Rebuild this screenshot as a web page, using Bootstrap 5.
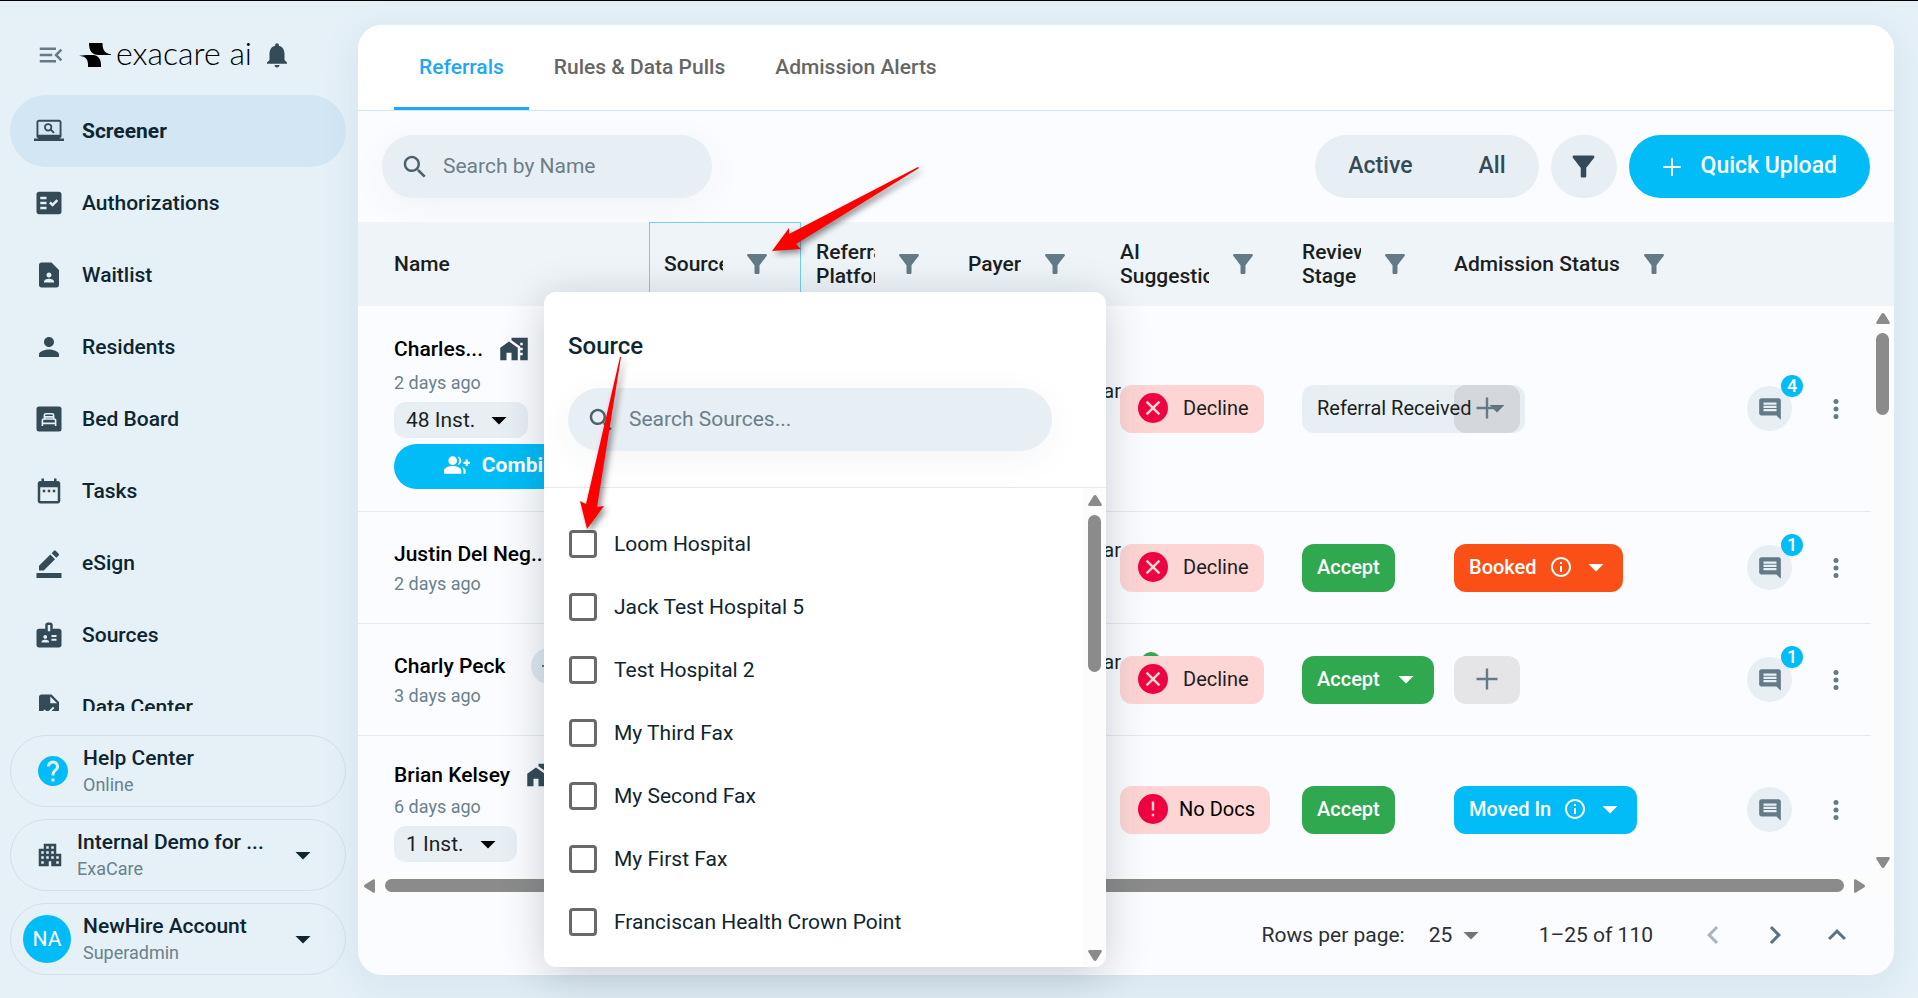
<!DOCTYPE html>
<html lang="en">
<head>
  <meta charset="UTF-8" />
  <meta name="viewport" content="width=device-width, initial-scale=1" />
  <title>Screener - Referrals</title>
  <link
    rel="stylesheet"
    href="https://cdn.jsdelivr.net/npm/bootstrap@5.3.0/dist/css/bootstrap.min.css"
  />
  <style>
    body {
      font-family: Roboto, "Liberation Sans", sans-serif;
      font-size: 21px;
      line-height: 24px;
      color: #1b1f22;
      background: #e5f0f7;
    }
    svg {
      fill: currentColor;
      flex-shrink: 0;
    }
    button {
      font-weight: inherit;
    }
    .i24 { width: 24px; height: 24px; }
    .i26 { width: 26px; height: 26px; }
    .i30 { width: 30px; height: 30px; }
    .i36 { width: 36px; height: 36px; }
    .fw-mid { font-weight: 500; }
    .ink-slate { color: #344a56; }
    .ink-gray { color: #647b87; }
    .ink-sky { color: #01bcf6; }
    .app-shell {
      height: 100vh;
      border-top: 1px solid #000;
      overflow: hidden;
    }

    /* Sidebar */
    .side-panel {
      width: 358px;
      padding: 0 12px 23px 10px;
    }
    .brand-row {
      height: 94px;
      padding: 14px 0 0 26px;
      color: #344a56;
    }
    .brand-mark {
      margin-left: 13px;
      color: #000;
    }
    .brand-name {
      font-family: Lato, sans-serif;
      font-weight: 300;
      font-size: 32px;
      width: 151px;
      padding: 0 0 4px 5px;
      color: #000;
    }
    .side-nav {
      overflow: hidden;
      min-height: 0;
    }
    .side-link {
      height: 72px;
      padding-left: 24px;
      gap: 18px;
      border-radius: 36px;
      color: #0f2530;
      font-weight: 500;
      text-decoration: none;
      flex-shrink: 0;
    }
    .side-link svg {
      color: #344a56;
    }
    .side-link.active {
      background: #d3e6f4;
      font-weight: 700;
    }
    .side-card {
      height: 72px;
      border: 1px solid #d3dfea;
      border-radius: 36px;
      background: none;
      color: #0f2530;
      text-align: left;
      padding: 0 24px;
    }
    .side-cards {
      gap: 12px;
      padding-top: 24px;
    }
    .side-sub {
      font-size: 18px;
      margin-top: 3px;
      color: #6b818c;
    }
    .avatar {
      width: 48px;
      height: 48px;
      background: #01bcf6;
      color: #fff;
      margin-left: -12px;
    }

    /* Main panel */
    .main-panel {
      margin: 24px 24px 23px 0;
      background: #fbfcff;
      border-radius: 24px;
      box-shadow: 0 8px 36px rgba(110, 150, 180, .14);
      min-width: 0;
    }
    .top-tabs {
      height: 86px;
      padding-left: 36px;
      background: #fff;
      border-bottom: 1px solid #cfe6f3;
      border-radius: 24px 24px 0 0;
    }
    .top-tabs .nav-link {
      padding: 12px 25px 0;
      height: 85px;
      border-radius: 0;
      color: #666;
      font-weight: 500;
      line-height: 60px;
    }
    .top-tabs .nav-link.active {
      color: #1ea7f2;
      border-bottom: 3px solid #1ea7f2;
    }
    .tool-bar {
      height: 111px;
      padding: 0 24px;
      gap: 12px;
    }
    .search-pill {
      height: 63px;
      border-radius: 32px;
      background: #e7eef4;
      box-shadow: 0 8px 36px rgba(30, 60, 90, .05);
      padding: 0 18px;
      gap: 13px;
      color: #4c626d;
    }
    .search-pill input {
      border: 0;
      padding: 0 0 2px;
      background: none;
      outline: 0;
      width: 100%;
      color: #1b1f22;
    }
    .search-pill input::placeholder {
      color: #6b7f8a;
      opacity: 1;
    }
    .search-main {
      width: 330px;
    }
    .soft-pill {
      height: 63px;
      border: 0;
      border-radius: 32px;
      background: #e7eef4;
      color: #344a56;
    }
    .soft-pill button {
      border: 0;
      background: none;
      color: inherit;
      padding: 0 33px 1px;
      font-size: 23px;
      font-weight: 500;
    }
    .filter-btn {
      width: 66px;
    }
    .filter-btn svg {
      width: 33px;
      height: 33px;
    }
    .upload-btn {
      height: 63px;
      border: 0;
      border-radius: 32px;
      background: #01bcf6;
      color: #fff;
      font-size: 23px;
      font-weight: 500;
      padding: 0 33px 0 28px;
      gap: 14px;
    }
    .upload-btn span {
      padding-bottom: 2px;
    }

    /* Table */
    .table-zone {
      min-height: 0;
      overflow: hidden;
    }
    .ref-table {
      table-layout: fixed;
      border-collapse: separate;
      border-spacing: 0;
      width: 100%;
      min-width: 1360px;
      align-self: flex-start;
    }
    .ref-table th {
      height: 84px;
      background: #eef4f8;
      padding: 0 15px;
      font-weight: 500;
      vertical-align: middle;
    }
    .ref-table td {
      padding: 0 0 0 15px;
      vertical-align: middle;
      border-bottom: 1px solid #e3eaf0;
      white-space: nowrap;
    }
    .ref-table th:first-child,
    .ref-table td:first-child {
      padding-left: 36px;
    }
    .ref-table th.picked {
      box-shadow: inset 0 0 0 1px #6fd0ee;
    }
    .head-text {
      overflow: hidden;
      min-width: 0;
    }
    .head-filter {
      border: 0;
      padding: 0;
      background: none;
      color: #647b87;
      margin: 0 14px 0 19px;
      line-height: 0;
    }
    .row-tall { height: 206px; }
    .row-mid { height: 112px; }
    .row-last { height: 148px; }
    .who {
      color: #000;
      font-weight: 500;
      height: 32px;
      gap: 16px;
    }
    .who svg {
      color: #344a56;
    }
    .who-36 { height: 36px; }
    .who-40 { height: 40px; }
    .ago {
      font-size: 18px;
      line-height: 20px;
      margin: 4px 0;
      color: #6b818c;
    }
    .inst-chip {
      height: 36px;
      border: 0;
      border-radius: 12px;
      background: #e7eef4;
      color: #1b1f22;
      padding: 0 11px 0 12px;
      gap: 6px;
      margin-top: 9px;
    }
    .inst-chip svg {
      color: #000;
    }
    .combine-btn {
      height: 45px;
      width: 222px;
      border: 0;
      border-radius: 23px;
      background: #01bcf6;
      color: #fff;
      font-weight: 700;
      margin-top: 6px;
      gap: 12px;
      padding-bottom: 3px;
    }
    .mini-btn {
      width: 36px;
      height: 36px;
      border: 0;
      padding: 0;
      margin-left: 10px;
      background: #e0e9f0;
      color: #344a56;
    }
    .payer-text {
      font-size: 20px;
      margin: 0 -16px 36px 0;
    }
    .payer-check {
      color: #30a84f;
      margin: 0 -58px 36px 18px;
    }
    .chip {
      height: 48px;
      border: 0;
      border-radius: 12px;
      padding: 0 15px 1px;
      gap: 12px;
      font-size: 20px;
      color: #1b1f22;
      position: relative;
    }
    .chip-drop { padding-right: 10px; gap: 8px; }
    .chip-red { background: #fed5d5; }
    .chip-red svg { color: #ee0340; }
    .chip-gray { background: #e7eef4; }
    .chip-gray svg { color: #647b87; }
    .chip-green { background: #30a84f; color: #fff; font-weight: 500; }
    .chip-orange { background: #fa5017; color: #fff; font-weight: 500; }
    .chip-blue { background: #01bcf6; color: #fff; font-weight: 500; }
    .chip-info { gap: 12px; padding-right: 9px; }
    .chip-info .i36 { margin: 0 0 0 -7px; }
    .chip-add {
      width: 66px;
      background: rgba(70, 60, 60, .12);
      color: #647b87;
    }
    .note-btn {
      width: 45px;
      height: 45px;
      border: 0;
      padding: 0;
      background: #e7eef4;
      color: #647b87;
    }
    .note-count {
      position: absolute;
      top: -11px;
      right: -11px;
      width: 22px;
      height: 22px;
      border-radius: 11px;
      background: #01bcf6;
      color: #fff;
      font-size: 18px;
      line-height: 22px;
      font-weight: 500;
    }
    .more-btn {
      border: 0;
      padding: 0;
      background: none;
      color: #647b87;
      margin: 0 20px 0 29px;
      line-height: 0;
    }

    /* Scroll bars */
    .bar-v {
      width: 23px;
      padding: 7px 0 6px;
      background: #fcfcfc;
      color: #8b8b8b;
    }
    .bar-h {
      height: 23px;
      padding: 0 29px 0 6px;
      background: #fcfcfc;
      color: #8b8b8b;
      gap: 10px;
    }
    .thumb {
      background: #8b8b8b;
      border-radius: 7px;
    }
    .bar-v .thumb { width: 13px; margin-top: 9px; }
    .bar-h .thumb { height: 13px; }
    .thumb-rows { height: 82px; }
    .thumb-options { height: 157px; }
    .head-cap { height: 84px; background: #eef4f8; }

    .pager {
      height: 78px;
      padding: 0 39px 2px 0;
      color: #2b2f32;
    }
    .pager button {
      border: 0;
      padding: 0;
      background: none;
      color: #5b7380;
      line-height: 0;
      margin-left: 26px;
    }
    .pager select {
      border: 0;
      background: none;
      appearance: none;
      color: inherit;
    }
    .page-caret {
      color: #6f7477;
      margin-right: 50px;
    }

    /* Source filter menu */
    .source-menu {
      position: absolute;
      left: 186px;
      top: 267px;
      bottom: 8px;
      width: 562px;
      background: #fff;
      border-radius: 12px;
      box-shadow: 0 8px 44px rgba(20, 40, 60, .22);
      overflow: hidden;
      z-index: 5;
    }
    .menu-top {
      padding: 36px 54px 36px 24px;
      border-bottom: 1px solid #e3eaf0;
    }
    .menu-title {
      font-size: 24px;
      line-height: 36px;
      font-weight: 500;
      color: #0f2530;
      margin-bottom: 24px;
    }
    .source-list {
      padding: 24px 0 0 25px;
      color: #0f2530;
      min-height: 0;
      overflow: hidden;
    }
    .source-list label {
      height: 63px;
      gap: 17px;
      flex-shrink: 0;
    }
    .source-list .form-check-input {
      width: 28px;
      height: 28px;
      margin: 0;
      border: 3px solid #696969;
      border-radius: 4px;
      flex-shrink: 0;
    }
    .pointer {
      position: absolute;
      z-index: 10;
      fill: #fe0000;
      filter: drop-shadow(3px 3px 3px rgba(0, 0, 0, .45));
      pointer-events: none;
      overflow: visible;
    }
    .pointer-filter { left: 771px; top: 165px; width: 150px; height: 90px; }
    .pointer-check { left: 579px; top: 356px; width: 44px; height: 176px; }
  </style>
</head>
<body>
  <!-- Icon set -->
  <svg class="d-none">
    <symbol id="menu" viewBox="0 0 24 24"><path d="M3 18h13v-2H3v2zm0-5h10v-2H3v2zm0-7v2h13V6H3zm18 9.59L17.42 12 21 8.41 19.59 7l-5 5 5 5L21 15.59z"/></symbol>
    <symbol id="bell" viewBox="0 0 24 24"><path d="M12 22c1.1 0 2-.9 2-2h-4c0 1.1.89 2 2 2zm6-6v-5c0-3.07-1.64-5.64-4.5-6.32V4c0-.83-.67-1.5-1.5-1.5s-1.5.67-1.5 1.5v.68C7.63 5.36 6 7.92 6 11v5l-2 2v1h16v-1l-2-2z"/></symbol>
    <symbol id="laptop" viewBox="0 0 24 24"><path d="M20 18c1.1 0 2-.9 2-2V5c0-1.1-.9-2-2-2H4c-1.1 0-2 .9-2 2v11c0 1.1.9 2 2 2H0v2h24v-2h-4zM3.5 4.5h17V15h-17z" fill-rule="evenodd"/><path d="M13 10.500l3 3" stroke="currentColor" stroke-width="1.500"/><circle cx="11.300" cy="9" r="2.600" fill="none" stroke="currentColor" stroke-width="1.400"/></symbol>
    <symbol id="checklist" viewBox="0 0 24 24"><path d="M20 3H4c-1.100 0-2 .9-2 2v14c0 1.100.9 2 2 2h16c1.100 0 2-.9 2-2V5c0-1.100-.9-2-2-2zM10 17H5v-2h5v2zm0-4H5v-2h5v2zm0-4H5V7h5v2zm4.820 6L12 12.160l1.410-1.410 1.410 1.420L17.990 9l1.420 1.420L14.820 15z"/></symbol>
    <symbol id="contact" viewBox="0 0 24 24"><path d="M14 2H6c-1.100 0-2 .9-2 2v16c0 1.100.9 2 2 2h12c1.100 0 2-.9 2-2V8l-6-6zm-2 8c1.100 0 2 .9 2 2s-.9 2-2 2-2-.9-2-2 .9-2 2-2zm4 8H8v-.57c0-.81.48-1.530 1.220-1.850.85-.37 1.790-.58 2.780-.58s1.930.21 2.780.58c.74.32 1.220 1.040 1.220 1.850V18z"/></symbol>
    <symbol id="person" viewBox="0 0 24 24"><path d="M12 12c2.210 0 4-1.790 4-4s-1.790-4-4-4-4 1.790-4 4 1.790 4 4 4zm0 2c-2.670 0-8 1.340-8 4v2h16v-2c0-2.660-5.330-4-8-4z"/></symbol>
    <symbol id="bed" viewBox="0 0 24 24"><rect x="2" y="2" width="20" height="20" rx="2"/><path d="M6.700 17.500v-4.200q0-1.300 1.400-1.300h7.800q1.400 0 1.400 1.300v4.200M6.700 15.500h10.600M8.300 12V9q0-1.200 1.200-1.200h5q1.200 0 1.200 1.200v3M8.300 10.300h7.400" fill="none" stroke="#e5f0f7" stroke-width="1.300"/></symbol>
    <symbol id="calendar" viewBox="0 0 24 24"><path d="M19 4h-1V2h-2v2H8V2H6v2H5c-1.110 0-2 .9-2 2v14c0 1.100.89 2 2 2h14c1.100 0 2-.9 2-2V6c0-1.100-.9-2-2-2zm0 16H5V9h14v11zM9 13H7v-2h2v2zm4 0h-2v-2h2v2zm4 0h-2v-2h2v2z"/></symbol>
    <symbol id="sign" viewBox="0 0 24 24"><path d="M22 24H2v-4h20v4zM13.060 5.190l3.750 3.750L7.750 18H4v-3.750l9.060-9.060zm4.820 2.680l-3.750-3.750 1.830-1.830c.39-.39 1.020-.39 1.410 0l2.340 2.340c.39.39.39 1.020 0 1.410l-1.830 1.830z"/></symbol>
    <symbol id="badge-id" viewBox="0 0 24 24"><path d="M20 7h-5V4c0-1.100-.9-2-2-2h-2c-1.100 0-2 .9-2 2v3H4c-1.100 0-2 .9-2 2v11c0 1.100.9 2 2 2h16c1.100 0 2-.9 2-2V9c0-1.100-.9-2-2-2zM9 12c.83 0 1.500.67 1.500 1.500S9.830 15 9 15s-1.500-.67-1.500-1.500S8.170 12 9 12zm3 6H6v-.75c0-1 2-1.500 3-1.500s3 .5 3 1.500V18zm1-9h-2V4h2v5zm5 7.500h-4V15h4v1.500zm0-3h-4V12h4v1.500z"/></symbol>
    <symbol id="file-check" viewBox="0 0 24 24"><path d="M14 2H6c-1.100 0-2 .9-2 2v16c0 1.100.9 2 2 2h12c1.100 0 2-.9 2-2V8l-6-6zm-1 7V3.500L18.500 9H13z"/><path d="M8 14.500l2.800 2.800 5-5" fill="none" stroke="#e5f0f7" stroke-width="1.600"/></symbol>
    <symbol id="help" viewBox="0 0 24 24"><path d="M12 2C6.480 2 2 6.480 2 12s4.480 10 10 10 10-4.480 10-10S17.520 2 12 2zm1 17h-2v-2h2v2zm2.070-7.750l-.9.92C13.450 12.900 13 13.500 13 15h-2v-.5c0-1.100.45-2.100 1.170-2.830l1.240-1.260c.37-.36.59-.86.59-1.410 0-1.100-.9-2-2-2s-2 .9-2 2H8c0-2.210 1.790-4 4-4s4 1.790 4 4c0 .88-.36 1.680-.93 2.250z"/></symbol>
    <symbol id="building" viewBox="0 0 24 24"><path d="M17 11V3H7v4H3v14h8v-4h2v4h8V11h-4zM7 19H5v-2h2v2zm0-4H5v-2h2v2zm0-4H5V9h2v2zm4 4H9v-2h2v2zm0-4H9V9h2v2zm0-4H9V5h2v2zm4 8h-2v-2h2v2zm0-4h-2V9h2v2zm0-4h-2V5h2v2zm4 12h-2v-2h2v2zm0-4h-2v-2h2v2z"/></symbol>
    <symbol id="caret" viewBox="0 0 24 24"><path d="M7 10l5 5 5-5z"/></symbol>
    <symbol id="search" viewBox="0 0 24 24"><path d="M15.500 14h-.79l-.28-.27C15.410 12.590 16 11.110 16 9.500 16 5.910 13.090 3 9.500 3S3 5.910 3 9.500 5.910 16 9.500 16c1.610 0 3.090-.59 4.230-1.570l.27.28v.79l5 4.990L20.490 19l-4.990-5zm-6 0C7.010 14 5 11.990 5 9.500S7.010 5 9.500 5 14 7.010 14 9.500 11.990 14 9.500 14z"/></symbol>
    <symbol id="funnel" viewBox="0 0 24 24"><path d="M4.250 5.610C6.270 8.200 10 13 10 13v6c0 .55.45 1 1 1h2c.55 0 1-.45 1-1v-6s3.720-4.800 5.740-7.390c.51-.66.04-1.610-.79-1.610H5.040c-.83 0-1.300.95-.79 1.610z"/></symbol>
    <symbol id="plus" viewBox="0 0 24 24"><path d="M19 12.800h-6.200V19h-1.600v-6.200H5v-1.600h6.200V5h1.600v6.200H19z"/></symbol>
    <symbol id="homes" viewBox="0 0 24 24"><path d="M1 11v10h5v-6h4v6h5V11L8 6z"/><path d="M10 3v1.970l7 5V11h2v2h-2v2h2v2h-2v4h6V3H10zm9 6h-2V7h2v2z"/></symbol>
    <symbol id="group-add" viewBox="0 0 24 24"><path d="M22 9V7h-2v2h-2v2h2v2h2v-2h2V9zM8 12c2.210 0 4-1.790 4-4s-1.790-4-4-4-4 1.790-4 4 1.790 4 4 4zm0 1c-2.670 0-8 1.340-8 4v3h16v-3c0-2.660-5.330-4-8-4zM12.510 4.050C13.430 5.110 14 6.490 14 8s-.57 2.890-1.490 3.950C14.470 11.700 16 10.040 16 8s-1.530-3.700-3.490-3.950zM16.530 13.830C17.420 14.660 18 15.700 18 17v3h2v-3c0-1.450-1.590-2.510-3.470-3.170z"/></symbol>
    <symbol id="note" viewBox="0 0 24 24"><path d="M22 4c0-1.100-.9-2-2-2H4c-1.100 0-2 .9-2 2v12c0 1.100.9 2 2 2h14l4 4V4zM18 14H6v-2h12v2zm0-3H6V9h12v2zm0-3H6V6h12v2z"/></symbol>
    <symbol id="more" viewBox="0 0 24 24"><circle cx="12" cy="6" r="2"/><circle cx="12" cy="12" r="2"/><circle cx="12" cy="18" r="2"/></symbol>
    <symbol id="info" viewBox="0 0 24 24"><path d="M11 7h2v2h-2zm0 4h2v6h-2zm1-9C6.480 2 2 6.480 2 12s4.480 10 10 10 10-4.480 10-10S17.520 2 12 2zm0 18c-4.410 0-8-3.590-8-8s3.590-8 8-8 8 3.590 8 8-3.590 8-8 8z"/></symbol>
    <symbol id="decline" viewBox="0 0 24 24"><circle cx="12" cy="12" r="10"/><path d="M7.700 7.700l8.600 8.600M16.300 7.700l-8.600 8.600" stroke="#fed5d5" stroke-width="1.700"/></symbol>
    <symbol id="alert" viewBox="0 0 24 24"><circle cx="12" cy="12" r="10"/><path d="M11.200 7h1.600v6h-1.600zM11.200 15.200h1.600v1.600h-1.600z" fill="#fed5d5"/></symbol>
    <symbol id="ok" viewBox="0 0 24 24"><circle cx="12" cy="12" r="10"/><path d="M7 12l3.500 4 6.500-8" fill="none" stroke="#fff" stroke-width="2"/></symbol>
    <symbol id="left" viewBox="0 0 24 24"><path d="M15.410 7.410L14 6l-6 6 6 6 1.410-1.410L10.830 12z"/></symbol>
    <symbol id="right" viewBox="0 0 24 24"><path d="M10 6L8.590 7.410 13.170 12l-4.580 4.590L10 18l6-6z"/></symbol>
    <symbol id="up" viewBox="0 0 24 24"><path d="M12 8l-6 6 1.410 1.410L12 10.830l4.590 4.580L18 14z"/></symbol>
    <symbol id="tri" viewBox="0 0 14 11"><path d="M7 0q1 0 1.600 1l5 8q.8 2-1.200 2H1.600q-2 0-1.200-2l5-8Q6 0 7 0z"/></symbol>
    <symbol id="tri-down" viewBox="0 0 14 11"><path d="M7 11q1 0 1.600-1l5-8q.8-2-1.200-2H1.600q-2 0-1.200 2l5 8q.6 1 1.600 1z"/></symbol>
    <symbol id="tri-left" viewBox="0 0 11 14"><path d="M0 7q0-1 1-1.600l8-5q2-.8 2 1.200v10.800q0 2-2 1.200l-8-5Q0 8 0 7z"/></symbol>
    <symbol id="tri-right" viewBox="0 0 11 14"><path d="M11 7q0-1-1-1.600l-8-5q-2-.8-2 1.200v10.800q0 2 2 1.200l8-5q1-.6 1-1.600z"/></symbol>
  </svg>

  <div class="app-shell d-flex">
    <!-- Sidebar -->
    <aside class="side-panel d-flex flex-column flex-shrink-0">
      <div class="brand-row d-flex align-items-center flex-shrink-0">
        <svg class="i30 ink-gray"><use href="#menu"/></svg>
        <svg class="brand-mark" width="32" height="24" viewBox="0 0 32 24"><path d="M10 0h13.500c0 6 1.500 10.500 8.500 11.200v.8H20C13 12 10 8 10 0z"/><path d="M0 12.700C5 12 9 11.700 14 12c6 .5 8.500 5 8 12H9c.5-7-1.500-10.500-9-11.300z"/></svg>
        <span class="brand-name text-nowrap">exacare ai</span>
        <svg class="i30"><use href="#bell"/></svg>
      </div>
      <nav class="side-nav d-flex flex-column flex-grow-1">
        <a class="side-link active d-flex align-items-center" href="#"><svg class="i30"><use href="#laptop"/></svg>Screener</a>
        <a class="side-link d-flex align-items-center" href="#"><svg class="i30"><use href="#checklist"/></svg>Authorizations</a>
        <a class="side-link d-flex align-items-center" href="#"><svg class="i30"><use href="#contact"/></svg>Waitlist</a>
        <a class="side-link d-flex align-items-center" href="#"><svg class="i30"><use href="#person"/></svg>Residents</a>
        <a class="side-link d-flex align-items-center" href="#"><svg class="i30"><use href="#bed"/></svg>Bed Board</a>
        <a class="side-link d-flex align-items-center" href="#"><svg class="i30"><use href="#calendar"/></svg>Tasks</a>
        <a class="side-link d-flex align-items-center" href="#"><svg class="i30"><use href="#sign"/></svg>eSign</a>
        <a class="side-link d-flex align-items-center" href="#"><svg class="i30"><use href="#badge-id"/></svg>Sources</a>
        <a class="side-link d-flex align-items-center" href="#"><svg class="i30"><use href="#file-check"/></svg>Data Center</a>
      </nav>
      <div class="side-cards d-flex flex-column flex-shrink-0">
        <button class="side-card d-flex align-items-center">
          <svg class="i36 ink-sky"><use href="#help"/></svg>
          <span class="ms-2 ps-1"><span class="d-block fw-mid">Help Center</span><span class="d-block side-sub">Online</span></span>
        </button>
        <button class="side-card d-flex align-items-center">
          <svg class="i30 ink-slate"><use href="#building"/></svg>
          <span class="ms-2 ps-1 flex-grow-1"><span class="d-block fw-mid">Internal Demo for ...</span><span class="d-block side-sub">ExaCare</span></span>
          <svg class="i36"><use href="#caret"/></svg>
        </button>
        <button class="side-card d-flex align-items-center">
          <span class="avatar rounded-circle d-flex align-items-center justify-content-center">NA</span>
          <span class="ms-2 ps-1 flex-grow-1"><span class="d-block fw-mid">NewHire Account</span><span class="d-block side-sub">Superadmin</span></span>
          <svg class="i36"><use href="#caret"/></svg>
        </button>
      </div>
    </aside>

    <!-- Main panel -->
    <main class="main-panel position-relative d-flex flex-column flex-grow-1">
      <ul class="top-tabs nav flex-shrink-0">
        <li class="nav-item"><a class="nav-link active" href="#">Referrals</a></li>
        <li class="nav-item"><a class="nav-link" href="#">Rules &amp; Data Pulls</a></li>
        <li class="nav-item"><a class="nav-link" href="#">Admission Alerts</a></li>
      </ul>

      <div class="tool-bar d-flex align-items-center flex-shrink-0">
        <label class="search-pill search-main d-flex align-items-center me-auto">
          <svg class="i30"><use href="#search"/></svg>
          <input type="text" placeholder="Search by Name" aria-label="Search by Name" />
        </label>
        <div class="soft-pill d-flex">
          <button>Active</button>
          <button>All</button>
        </div>
        <button class="soft-pill filter-btn p-0" aria-label="Filter"><svg><use href="#funnel"/></svg></button>
        <button class="upload-btn d-flex align-items-center"><svg class="i30"><use href="#plus"/></svg><span>Quick Upload</span></button>
      </div>

      <div class="table-zone d-flex flex-grow-1">
        <table class="ref-table">
          <colgroup>
            <col style="width:291px" /><col style="width:152px" /><col style="width:152px" /><col style="width:152px" />
            <col style="width:182px" /><col style="width:152px" /><col /><col style="width:140px" />
          </colgroup>
          <thead>
            <tr>
              <th>Name</th>
              <th class="picked"><div class="d-flex align-items-center"><span class="head-text">Source</span><button class="head-filter" aria-label="Filter source"><svg class="i30"><use href="#funnel"/></svg></button></div></th>
              <th><div class="d-flex align-items-center"><span class="head-text">Referral Platform</span><button class="head-filter" aria-label="Filter platform"><svg class="i30"><use href="#funnel"/></svg></button></div></th>
              <th><div class="d-flex align-items-center"><span class="head-text">Payer</span><button class="head-filter" aria-label="Filter payer"><svg class="i30"><use href="#funnel"/></svg></button></div></th>
              <th><div class="d-flex align-items-center"><span class="head-text">AI Suggestion</span><button class="head-filter" aria-label="Filter suggestion"><svg class="i30"><use href="#funnel"/></svg></button></div></th>
              <th><div class="d-flex align-items-center"><span class="head-text">Review Stage</span><button class="head-filter" aria-label="Filter stage"><svg class="i30"><use href="#funnel"/></svg></button></div></th>
              <th><div class="d-flex align-items-center"><span class="head-text">Admission Status</span><button class="head-filter" aria-label="Filter status"><svg class="i30"><use href="#funnel"/></svg></button></div></th>
              <th></th>
            </tr>
          </thead>
          <tbody>
            <tr class="row-tall">
              <td>
                <div class="who who-40 d-flex align-items-center">Charles... <svg class="i30"><use href="#homes"/></svg></div>
                <div class="ago">2 days ago</div>
                <button class="inst-chip d-flex align-items-center">48 Inst.<svg class="i36"><use href="#caret"/></svg></button>
                <button class="combine-btn d-flex align-items-center justify-content-center"><svg class="i26"><use href="#group-add"/></svg>Combine</button>
              </td>
              <td></td><td></td>
              <td><div class="payer-text text-end">ar</div></td>
              <td><button class="chip chip-red d-flex align-items-center"><svg class="i36"><use href="#decline"/></svg>Decline</button></td>
              <td><button class="chip chip-gray chip-drop d-flex align-items-center">Referral Received<svg class="i36"><use href="#caret"/></svg></button></td>
              <td><button class="chip chip-add" aria-label="Add status"><svg class="i36"><use href="#plus"/></svg></button></td>
              <td><div class="d-flex align-items-center justify-content-end"><button class="note-btn rounded-circle position-relative"><svg class="i26"><use href="#note"/></svg><span class="note-count">4</span></button><button class="more-btn" aria-label="More"><svg class="i30"><use href="#more"/></svg></button></div></td>
            </tr>
            <tr class="row-mid">
              <td>
                <div class="who d-flex align-items-center">Justin Del Neg...</div>
                <div class="ago">2 days ago</div>
              </td>
              <td></td><td></td>
              <td><div class="payer-text text-end">ar</div></td>
              <td><button class="chip chip-red d-flex align-items-center"><svg class="i36"><use href="#decline"/></svg>Decline</button></td>
              <td><button class="chip chip-green">Accept</button></td>
              <td><button class="chip chip-orange chip-drop chip-info d-flex align-items-center">Booked<svg class="i24"><use href="#info"/></svg><svg class="i36"><use href="#caret"/></svg></button></td>
              <td><div class="d-flex align-items-center justify-content-end"><button class="note-btn rounded-circle position-relative"><svg class="i26"><use href="#note"/></svg><span class="note-count">1</span></button><button class="more-btn" aria-label="More"><svg class="i30"><use href="#more"/></svg></button></div></td>
            </tr>
            <tr class="row-mid">
              <td>
                <div class="who d-flex align-items-center">Charly Peck <button class="mini-btn rounded-circle" aria-label="Add"><svg class="i24"><use href="#plus"/></svg></button></div>
                <div class="ago">3 days ago</div>
              </td>
              <td></td><td></td>
              <td><div class="d-flex justify-content-end"><span class="payer-text me-0">ar</span><svg class="i24 payer-check"><use href="#ok"/></svg></div></td>
              <td><button class="chip chip-red d-flex align-items-center"><svg class="i36"><use href="#decline"/></svg>Decline</button></td>
              <td><button class="chip chip-green chip-drop d-flex align-items-center">Accept<svg class="i36"><use href="#caret"/></svg></button></td>
              <td><button class="chip chip-add" aria-label="Add status"><svg class="i36"><use href="#plus"/></svg></button></td>
              <td><div class="d-flex align-items-center justify-content-end"><button class="note-btn rounded-circle position-relative"><svg class="i26"><use href="#note"/></svg><span class="note-count">1</span></button><button class="more-btn" aria-label="More"><svg class="i30"><use href="#more"/></svg></button></div></td>
            </tr>
            <tr class="row-last">
              <td>
                <div class="who who-36 d-flex align-items-center">Brian Kelsey <svg class="i30"><use href="#homes"/></svg></div>
                <div class="ago">6 days ago</div>
                <button class="inst-chip d-flex align-items-center">1 Inst.<svg class="i36"><use href="#caret"/></svg></button>
              </td>
              <td></td><td></td><td></td>
              <td><button class="chip chip-red d-flex align-items-center text-black gap-2"><svg class="i36"><use href="#alert"/></svg>No Docs</button></td>
              <td><button class="chip chip-green">Accept</button></td>
              <td><button class="chip chip-blue chip-drop chip-info d-flex align-items-center">Moved In<svg class="i24"><use href="#info"/></svg><svg class="i36"><use href="#caret"/></svg></button></td>
              <td><div class="d-flex align-items-center justify-content-end"><button class="note-btn rounded-circle position-relative"><svg class="i26"><use href="#note"/></svg></button><button class="more-btn" aria-label="More"><svg class="i30"><use href="#more"/></svg></button></div></td>
            </tr>
          </tbody>
        </table>
        <div class="d-flex flex-column flex-shrink-0">
          <div class="head-cap"></div>
          <div class="bar-v d-flex flex-column align-items-center flex-grow-1">
            <svg width="14" height="11"><use href="#tri"/></svg>
            <div class="thumb thumb-rows"></div>
            <svg class="mt-auto" width="14" height="11"><use href="#tri-down"/></svg>
          </div>
        </div>
      </div>

      <div class="bar-h d-flex align-items-center flex-shrink-0">
        <svg width="11" height="14"><use href="#tri-left"/></svg>
        <div class="thumb flex-grow-1"></div>
        <svg width="11" height="14"><use href="#tri-right"/></svg>
      </div>

      <div class="pager d-flex align-items-center justify-content-end flex-shrink-0">
        <label for="pageSize" class="me-4">Rows per page:</label>
        <select id="pageSize" class="p-0"><option>25</option></select>
        <svg class="i36 page-caret"><use href="#caret"/></svg>
        <span class="me-3">1–25 of 110</span>
        <button class="opacity-50" aria-label="Previous page"><svg class="i36"><use href="#left"/></svg></button>
        <button aria-label="Next page"><svg class="i36"><use href="#right"/></svg></button>
        <button aria-label="Scroll to top"><svg class="i36"><use href="#up"/></svg></button>
      </div>

      <!-- Source filter menu -->
      <div class="source-menu d-flex flex-column">
        <div class="menu-top">
          <div class="menu-title">Source</div>
          <label class="search-pill d-flex align-items-center">
            <svg class="i30"><use href="#search"/></svg>
            <input type="text" placeholder="Search Sources..." aria-label="Search Sources" />
          </label>
        </div>
        <div class="d-flex flex-grow-1 overflow-hidden">
          <div class="source-list d-flex flex-column flex-grow-1">
            <label class="d-flex align-items-center"><input class="form-check-input" type="checkbox" />Loom Hospital</label>
            <label class="d-flex align-items-center"><input class="form-check-input" type="checkbox" />Jack Test Hospital 5</label>
            <label class="d-flex align-items-center"><input class="form-check-input" type="checkbox" />Test Hospital 2</label>
            <label class="d-flex align-items-center"><input class="form-check-input" type="checkbox" />My Third Fax</label>
            <label class="d-flex align-items-center"><input class="form-check-input" type="checkbox" />My Second Fax</label>
            <label class="d-flex align-items-center"><input class="form-check-input" type="checkbox" />My First Fax</label>
            <label class="d-flex align-items-center"><input class="form-check-input" type="checkbox" />Franciscan Health Crown Point</label>
          </div>
          <div class="bar-v d-flex flex-column align-items-center flex-shrink-0">
            <svg width="14" height="11"><use href="#tri"/></svg>
            <div class="thumb thumb-options"></div>
            <svg class="mt-auto" width="14" height="11"><use href="#tri-down"/></svg>
          </div>
        </div>
      </div>
    </main>
  </div>

  <!-- Callout arrows -->
  <svg class="pointer pointer-filter" viewBox="771 165 150 90"><path d="M772 251L789 228V234L918 167L919 168L796 244L801 249z"/></svg>
  <svg class="pointer pointer-check" viewBox="579 356 44 176"><path d="M587 529L580 501L586 504L620 357H621L597 507L604 506z"/></svg>

  <script src="https://cdn.jsdelivr.net/npm/bootstrap@5.3.0/dist/js/bootstrap.bundle.min.js"></script>
</body>
</html>
